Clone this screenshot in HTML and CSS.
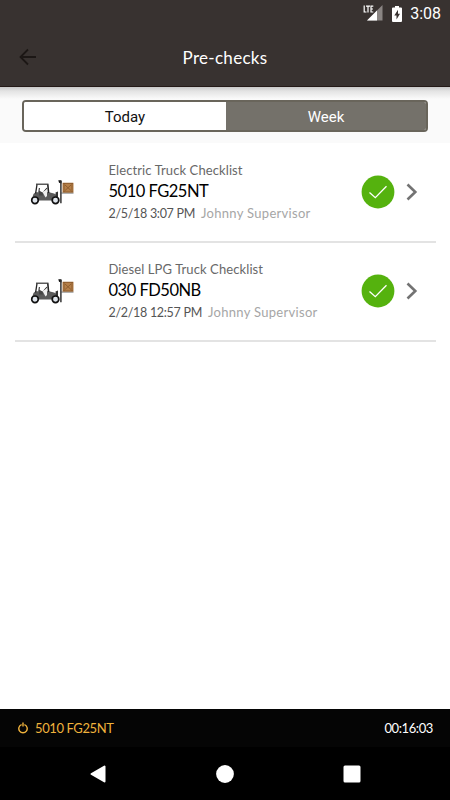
FILE: index.html
```html
<!DOCTYPE html>
<html lang="en">
<head>
  <meta charset="UTF-8" />
  <meta name="viewport" content="width=device-width, initial-scale=1.0" />
  <title>Pre-checks</title>
  <link rel="stylesheet" href="styles.css">
</head>
<body>

  <!-- shared drawings -->
  <svg class="defs" width="0" height="0">
    <symbol id="truck" viewBox="0 0 45 28">
      <path d="M2 18.5L3.5 14L5.5 12.2H19L24 13.5Q27.5 14.5 28 20.5H9Q7 16 2 18.5Z" fill="#5a5a5a"/>
      <path d="M5.6 13.5L7 4.5" fill="none" stroke="#222" stroke-width="1.3"/>
      <path d="M6 4.2H18.5" fill="none" stroke="#333" stroke-width="1.2"/>
      <path d="M17.8 4.5L18.6 13" fill="none" stroke="#222" stroke-width="1.6"/>
      <path d="M9.4 8L8.8 12.5M13.5 12L17 8" fill="none" stroke="#333" stroke-width="1.1"/>
      <path d="M9 10.5L12.5 12.5L13 15.5H9Z" fill="#444"/>
      <path d="M12.5 12L17 9.5V16L15.5 17.5Z" fill="#eee"/>
      <path d="M25.5 12.5L28 11.5V19H26Z" fill="#333"/>
      <circle cx="5" cy="20.3" r="3.3" fill="#dfe5ec" stroke="#111" stroke-width="1.7"/>
      <circle cx="25.5" cy="20.3" r="3.3" fill="#dfe5ec" stroke="#111" stroke-width="1.7"/>
      <path d="M28.3 0.3H31.5V3.5L29 2.8Z" fill="#111"/>
      <path d="M30.9 1V23.2" fill="none" stroke="#333" stroke-width="1.5"/>
      <path d="M31 13H43.5" stroke="#555" stroke-width="0.9"/>
      <path d="M32.5 2.8H43.5V12.5H32.5Z" fill="#b57f48"/>
      <path d="M33 3.4H43M33 12H43M35 5L41 10.5M41 5L35 10.5M34 3V12M42 3V12" fill="none" stroke="#85552a" stroke-width="0.8"/>
    </symbol>
    <symbol id="done" viewBox="0 0 34 34">
      <circle cx="17" cy="17" r="16.4" fill="#55b20e"/>
      <path d="M8.5 17.5L14.3 22.7L25.5 11.3" fill="none" stroke="#fff" stroke-width="1.3"/>
    </symbol>
    <symbol id="chevron" viewBox="0 0 12 18">
      <path d="M1.5 1.5L9.3 9L1.5 16.5" fill="none" stroke="#737373" stroke-width="2.6"/>
    </symbol>
  </svg>

  <header>
    <div class="status">
      <svg class="signal" width="21" height="17" viewBox="0 0 21 17">
        <path d="M19.5 0V15.5H4Z" fill="#8a8583"/>
        <path d="M14 5.5V15.5H4Z" fill="#fff"/>
        <path d="M0 0H11V8H0Z" fill="#383230"/>
        <path d="M1.2 0.5V7H3.5M3 1.1H7M5 1.1V7.5M10.3 1.1H8V7H10.3M8 4H10" fill="none" stroke="#fff" stroke-width="1.2"/>
      </svg>
      <svg class="battery" width="10" height="16" viewBox="0 0 10 16">
        <path d="M3 0H7V1.5H9Q10 1.5 10 2.5V15Q10 16 9 16H1Q0 16 0 15V2.5Q0 1.5 1 1.5H3Z" fill="#fff"/>
        <path d="M6 3.8L2.3 9.4H4.5V13.6L8 7.8H6Z" fill="#383230"/>
      </svg>
      <span class="clock">3:08</span>
    </div>
    <div class="titlebar">
      <svg class="back" width="18" height="18" viewBox="0 0 18 18">
        <path d="M17 9H2M9 1.5L1.5 9L9 16.5" fill="none" stroke="#1c1715" stroke-width="1.8"/>
      </svg>
      <h1>Pre-checks</h1>
    </div>
  </header>

  <div class="filter">
    <div class="segments">
      <button class="today">Today</button>
      <button class="week">Week</button>
    </div>
  </div>

  <main>
    <div class="row">
      <svg class="truck"><use href="#truck"/></svg>
      <div class="info">
        <div class="type">Electric Truck Checklist</div>
        <div class="model">5010 FG25NT</div>
        <div class="meta"><span class="date">2/5/18 3:07 PM</span><span class="user">Johnny Supervisor</span></div>
      </div>
      <svg class="done"><use href="#done"/></svg>
      <svg class="chevron"><use href="#chevron"/></svg>
    </div>
    <div class="row">
      <svg class="truck"><use href="#truck"/></svg>
      <div class="info">
        <div class="type">Diesel LPG Truck Checklist</div>
        <div class="model">030 FD50NB</div>
        <div class="meta"><span class="date">2/2/18 12:57 PM</span><span class="user">Johnny Supervisor</span></div>
      </div>
      <svg class="done"><use href="#done"/></svg>
      <svg class="chevron"><use href="#chevron"/></svg>
    </div>
  </main>

  <div class="session">
    <svg width="10" height="12" viewBox="0 0 10 12">
      <path d="M3.6 2.6A4.2 4.2 0 1 0 6.4 2.6M5 0.5V4.5" fill="none" stroke="#f0b23c" stroke-width="1.4"/>
    </svg>
    <span class="machine">5010 FG25NT</span>
    <span class="timer">00:16:03</span>
  </div>

  <nav>
    <svg width="18" height="18" viewBox="0 0 18 18"><path d="M2.5 9L15.5 1.5V16.5Z" fill="#fff" stroke="#fff" stroke-width="2" stroke-linejoin="round"/></svg>
    <svg width="18" height="18" viewBox="0 0 18 18"><circle cx="9" cy="9" r="8.9" fill="#fff"/></svg>
    <svg width="18" height="18" viewBox="0 0 18 18"><rect x="0.5" y="0.5" width="17" height="17" rx="1.5" fill="#fff"/></svg>
  </nav>

</body>
</html>
```

FILE: styles.css
```css
body {
  margin: 0;
  height: 100vh;
  display: flex;
  flex-direction: column;
  background: #fff;
  font-family: Lato, "Liberation Sans", sans-serif;
  overflow: hidden;
}

.defs {
  position: absolute;
}

header {
  height: 87px;
  box-sizing: border-box;
  background: #383230;
  border-bottom: 1px solid #241a17;
  color: #fff;
}

.status {
  height: 27px;
  display: flex;
  justify-content: flex-end;
  align-items: center;
  padding-right: 9px;
}

.battery {
  margin: 0 8px 0 8px;
}

.clock {
  font: 16px Roboto, sans-serif;
  line-height: 28px;
}

.titlebar {
  height: 60px;
  display: grid;
  grid-template-columns: 60px 1fr 60px;
  align-items: center;
}

.back {
  margin-left: 19px;
}

h1 {
  margin: 0;
  text-align: center;
  font-size: 17px;
  font-weight: 400;
  letter-spacing: 0.3px;
}

.filter {
  height: 56px;
  box-sizing: border-box;
  padding: 13px 22px 0;
  background: linear-gradient(#c9c9c9, #e3e3e3 4px, #fafafa 12px);
}

.segments {
  height: 32px;
  box-sizing: border-box;
  display: grid;
  grid-template-columns: 202px 1fr;
  border: 2px solid #69655b;
  border-radius: 4px;
  overflow: hidden;
}

.segments button {
  border: 0;
  padding: 1px 0 0;
  font: 15px Roboto, sans-serif;
}

.today {
  background: #fff;
  color: #111;
}

.week {
  background: #74716a;
  color: #fff;
}

main {
  flex: 1;
  padding: 1px 14px 0 15px;
}

.row {
  height: 99px;
  box-sizing: border-box;
  display: flex;
  align-items: center;
  padding-bottom: 2px;
  border-bottom: 2px solid #e3e3e3;
}

.truck {
  width: 45px;
  height: 28px;
  margin: 4px 0 0 15px;
}

.info {
  flex: 1;
  margin-left: 33.5px;
  white-space: nowrap;
}

.type {
  font-size: 13px;
  line-height: 20px;
  letter-spacing: 0.1px;
  color: #686868;
}

.model {
  font-size: 16.5px;
  line-height: 23px;
  letter-spacing: -0.5px;
  color: #000;
}

.meta {
  font-size: 13px;
  line-height: 20px;
}

.date {
  font-size: 12.5px;
  letter-spacing: -0.3px;
  color: #555;
}

.user {
  margin-left: 6px;
  letter-spacing: 0.3px;
  color: #a6a6a6;
}

.done {
  width: 34px;
  height: 34px;
}

.chevron {
  width: 12px;
  height: 18px;
  margin: 0 18px 0 11px;
}

.session {
  height: 38px;
  display: flex;
  align-items: center;
  padding: 0 17px 0 18px;
  background: #050505;
  font-size: 13px;
  letter-spacing: -0.4px;
  color: #f0b23c;
}

.machine {
  margin-left: 7px;
}

.timer {
  margin-left: auto;
  color: #fff;
}

nav {
  height: 53px;
  display: flex;
  justify-content: center;
  align-items: center;
  gap: 109px;
  background: #000;
}
```
